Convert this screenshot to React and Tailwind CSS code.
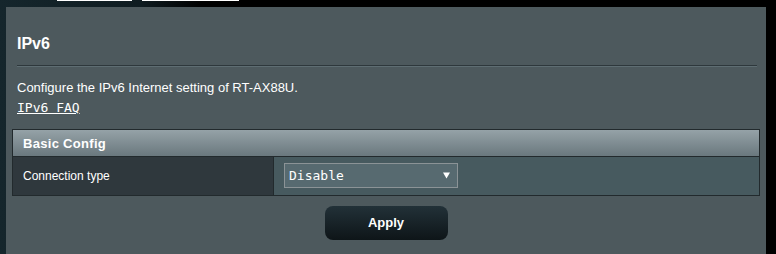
export default function App() {
  return (
    <div className="w-[776px] h-[254px] overflow-hidden bg-black bg-[linear-gradient(90deg,#15262c_0%,#0f1c21_18%,#000_26%)] font-['Liberation_Sans',Arial,sans-serif]">
      <div className="h-[7px] flex">
        <div className="ml-[57px] w-[75px] h-px bg-white" />
        <div className="ml-[10px] w-[97px] h-px bg-white" />
      </div>
      <div className="ml-[6px] w-[760px] h-[247px] bg-[#4d595d]">
        <div className="pl-[11px] pr-[9px] pt-[27px]">
          <div className="text-[16px] leading-[20px] font-bold text-white">IPv6</div>
          <div className="mt-[11px] border-t border-t-[#2e383c] border-b border-b-[#5e6d72]" />
          <div className="mt-[11px] text-[13px] leading-[20px] text-white">
            Configure the IPv6 Internet setting of RT-AX88U.
          </div>
          <div className="text-[13px] leading-[20px]">
            <a className="text-white underline font-['DejaVu_Sans_Mono',monospace]">IPv6 FAQ</a>
          </div>
        </div>
        <div className="ml-[6px] mt-[11px] w-[748px] border border-[#222a2d]">
          <div className="h-[27px] leading-[27px] pl-[10px] text-[13px] font-bold tracking-[0.3px] text-white bg-[linear-gradient(180deg,#95a2a7_0%,#6a787e_100%)] border-b border-[#222a2d]">
            Basic Config
          </div>
          <div className="flex h-[38px]">
            <div className="w-[261px] border-r border-[#222a2d] bg-[#2f383d] pl-[10px] text-[12px] leading-[38px] text-white">
              Connection type
            </div>
            <div className="flex-1 bg-[#475a5f] pl-[10px] flex items-center">
              <div className="w-[174px] h-[25px] border border-[#8b9396] bg-[#576a70] flex items-center justify-between pl-[4px] pr-[7px] -mt-[1px]">
                <span className="text-white text-[13px] font-['DejaVu_Sans_Mono',monospace]">Disable</span>
                <svg width="7" height="7" viewBox="0 0 7 7"><path d="M0 0.5 L7 0.5 L3.5 6.5 Z" fill="#fff" /></svg>
              </div>
            </div>
          </div>
        </div>
        <div className="flex justify-center mt-[10px]">
          <button className="w-[123px] h-[34px] rounded-[8px] bg-[linear-gradient(180deg,#223138_0%,#0e1518_100%)] text-white text-[13px] font-bold">
            Apply
          </button>
        </div>
      </div>
    </div>
  );
}
